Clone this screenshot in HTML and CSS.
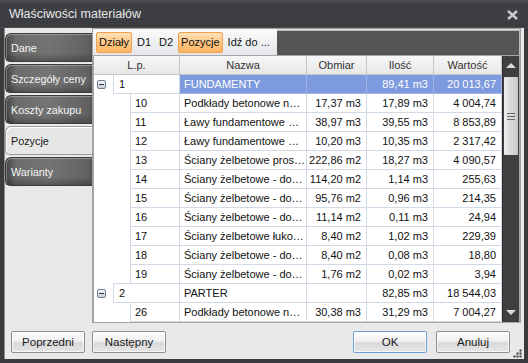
FILE: index.html
```html
<!DOCTYPE html>
<html lang="pl">
<head>
<meta charset="utf-8">
<title>Właściwości materiałów</title>
<link rel="stylesheet" href="styles.css">
</head>
<body>
<div class="window">
  <div class="titlebar">
    <span class="title">Właściwości materiałów</span>
    <span class="close">
      <svg width="11" height="10" viewBox="0 0 11 10"><path d="M1 1 L10 9 M10 1 L1 9" stroke="#c9cdd3" stroke-width="2.4" fill="none"/></svg>
    </span>
  </div>
  <div class="body">
    <div class="content">
      <div class="sidebar">
        <div class="tab">Dane</div>
        <div class="tab">Szczegóły ceny</div>
        <div class="tab">Koszty zakupu</div>
        <div class="tab active">Pozycje</div>
        <div class="tab">Warianty</div>
      </div>
      <div class="panel">
        <div class="toolbar">
          <div class="tb-items">
            <span class="tb-btn on">Działy</span>
            <span class="tb-btn">D1</span>
            <span class="tb-btn">D2</span>
            <span class="tb-btn on">Pozycje</span>
            <span class="tb-btn">Idź do ...</span>
          </div>
          <div class="tb-fill"></div>
        </div>
        <div class="grid">
          <div class="table">
            <div class="row head">
              <div class="c span3 hc">L.p.</div>
              <div class="c hc">Nazwa</div>
              <div class="c hc">Obmiar</div>
              <div class="c hc">Ilość</div>
              <div class="c hc">Wartość</div>
            </div>
            <div class="row group sel">
              <div class="c exp"><span class="minus"></span></div>
              <div class="c span2 gnum">1</div>
              <div class="c hl">FUNDAMENTY</div>
              <div class="c hl num"></div>
              <div class="c hl num">89,41 m3</div>
              <div class="c hl num">20 013,67</div>
            </div>
            <div class="row">
              <div class="c blank"></div><div class="c ind"></div>
              <div class="c">10</div><div class="c">Podkłady betonowe n…</div>
              <div class="c num">17,37 m3</div><div class="c num">17,89 m3</div><div class="c num">4 004,74</div>
            </div>
            <div class="row">
              <div class="c blank"></div><div class="c ind"></div>
              <div class="c">11</div><div class="c">Ławy fundamentowe …</div>
              <div class="c num">38,97 m3</div><div class="c num">39,55 m3</div><div class="c num">8 853,89</div>
            </div>
            <div class="row">
              <div class="c blank"></div><div class="c ind"></div>
              <div class="c">12</div><div class="c">Ławy fundamentowe …</div>
              <div class="c num">10,20 m3</div><div class="c num">10,35 m3</div><div class="c num">2 317,42</div>
            </div>
            <div class="row">
              <div class="c blank"></div><div class="c ind"></div>
              <div class="c">13</div><div class="c">Ściany żelbetowe pros…</div>
              <div class="c num">222,86 m2</div><div class="c num">18,27 m3</div><div class="c num">4 090,57</div>
            </div>
            <div class="row">
              <div class="c blank"></div><div class="c ind"></div>
              <div class="c">14</div><div class="c">Ściany żelbetowe - do…</div>
              <div class="c num">114,20 m2</div><div class="c num">1,14 m3</div><div class="c num">255,63</div>
            </div>
            <div class="row">
              <div class="c blank"></div><div class="c ind"></div>
              <div class="c">15</div><div class="c">Ściany żelbetowe - do…</div>
              <div class="c num">95,76 m2</div><div class="c num">0,96 m3</div><div class="c num">214,35</div>
            </div>
            <div class="row">
              <div class="c blank"></div><div class="c ind"></div>
              <div class="c">16</div><div class="c">Ściany żelbetowe - do…</div>
              <div class="c num">11,14 m2</div><div class="c num">0,11 m3</div><div class="c num">24,94</div>
            </div>
            <div class="row">
              <div class="c blank"></div><div class="c ind"></div>
              <div class="c">17</div><div class="c">Ściany żelbetowe łuko…</div>
              <div class="c num">8,40 m2</div><div class="c num">1,02 m3</div><div class="c num">229,39</div>
            </div>
            <div class="row">
              <div class="c blank"></div><div class="c ind"></div>
              <div class="c">18</div><div class="c">Ściany żelbetowe - do…</div>
              <div class="c num">8,40 m2</div><div class="c num">0,08 m3</div><div class="c num">18,80</div>
            </div>
            <div class="row">
              <div class="c blank"></div><div class="c ind last"></div>
              <div class="c">19</div><div class="c">Ściany żelbetowe - do…</div>
              <div class="c num">1,76 m2</div><div class="c num">0,02 m3</div><div class="c num">3,94</div>
            </div>
            <div class="row group">
              <div class="c exp"><span class="minus"></span></div>
              <div class="c span2 gnum">2</div>
              <div class="c">PARTER</div>
              <div class="c num"></div>
              <div class="c num">82,85 m3</div>
              <div class="c num">18 544,03</div>
            </div>
            <div class="row">
              <div class="c blank"></div><div class="c ind"></div>
              <div class="c">26</div><div class="c">Podkłady betonowe n…</div>
              <div class="c num">30,38 m3</div><div class="c num">31,29 m3</div><div class="c num">7 004,27</div>
            </div>
          </div>
          <div class="scrollbar">
            <div class="sb-btn"><span class="tri-up"></span></div>
            <div class="sb-track">
              <div class="thumb"><span class="grip"></span><span class="grip"></span><span class="grip"></span></div>
            </div>
            <div class="sb-btn"><span class="tri-down"></span></div>
          </div>
        </div>
      </div>
    </div>
    <div class="footer">
      <div class="btn-group">
        <button class="btn">Poprzedni</button>
        <button class="btn">Następny</button>
      </div>
      <div class="btn-group">
        <button class="btn default">OK</button>
        <button class="btn">Anuluj</button>
      </div>
      <div class="resize-grip">
        <svg width="9" height="9" viewBox="0 0 9 9" fill="#3a3a3a">
          <rect x="6.5" y="0.5" width="2" height="2"/>
          <rect x="3.5" y="3.5" width="2" height="2"/><rect x="6.5" y="3.5" width="2" height="2"/>
          <rect x="0.5" y="6.5" width="2" height="2"/><rect x="3.5" y="6.5" width="2" height="2"/><rect x="6.5" y="6.5" width="2" height="2"/>
        </svg>
      </div>
    </div>
  </div>
</div>
</body>
</html>
```
FILE: styles.css
```css
* { box-sizing: border-box; }
html, body { margin: 0; padding: 0; }
body {
  width: 528px;
  height: 363px;
  overflow: hidden;
  background: #393939;
  font-family: "Liberation Sans", Arial, sans-serif;
  font-size: 11px;
  color: #111;
}
.window {
  width: 528px;
  height: 363px;
  display: flex;
  flex-direction: column;
  background: #3a3b3e;
}
.titlebar {
  height: 28px;
  flex: none;
  display: flex;
  align-items: center;
  justify-content: space-between;
  padding: 0 10px 0 9px;
  background: linear-gradient(#4c4d52 0, #4a4b50 2px, #3f4045 3px, #3b3c40 100%);
  border-bottom: 1px solid #4a4b4f;
}
.title {
  color: #e6e6e6;
  font-size: 12.5px;
  padding-top: 1px;
}
.close { display: flex; padding-top: 2px; }

.body {
  flex: 1;
  margin: 0 4px 4px;
  background: #e9e9e9;
  display: flex;
  flex-direction: column;
  position: relative;
  border-left: 1px solid #8c8c8c;
}
.content {
  display: flex;
  height: 295px;
}
.sidebar {
  width: 87px;
  padding-top: 5px;
  display: flex;
  flex-direction: column;
  gap: 2px;
}
.tab {
  height: 29px;
  display: flex;
  align-items: center;
  padding-left: 5px;
  font-size: 10.8px;
  white-space: nowrap;
  color: #f4f4f4;
  border: 1px solid #3a3a3a;
  border-right: none;
  border-radius: 6px 0 0 5px;
  background: linear-gradient(to right, #4a4a4a 0, #6c6c6c 12%, #747474 50%, #606060 100%);
  box-shadow: inset 1px 1px 0 rgba(255,255,255,0.3), inset 0 -4px 5px rgba(0,0,0,0.25);
}
.tab.active {
  background: #e6e6e6;
  color: #1a1a1a;
  border-color: #9a9a9a;
  box-shadow: inset 1px 1px 0 #fff;
}
.panel {
  width: 429px;
  border: 1px solid #9f9f9f;
  background: #d8d8d8;
  display: flex;
  flex-direction: column;
}
.toolbar {
  height: 26px;
  display: flex;
  flex: none;
}
.tb-items {
  display: flex;
  align-items: center;
  gap: 2px;
  padding: 0 4px 0 3px;
  background: linear-gradient(#fbfbfb, #e4e6ea);
}
.tb-btn {
  height: 21px;
  display: flex;
  align-items: center;
  padding: 0 2px;
  border: 1px solid transparent;
  border-radius: 2px;
  font-size: 11px;
  white-space: nowrap;
}
.tb-btn.on {
  background: linear-gradient(#ffe2b8, #ffc47e 55%, #ffb565);
  border-color: #f0a04c;
}
.tb-fill {
  flex: 1;
  background: #555555;
  border-top: 1px solid #bdbdbd;
  border-right: 1px solid #bdbdbd;
  margin-top: 1px;
}
.grid {
  flex: 1;
  display: flex;
  border: 1px solid #a6a6a6;
  background: #fff;
}
.table {
  width: 408px;
  display: flex;
  flex-direction: column;
}
.row {
  display: grid;
  grid-template-columns: 19px 18px 49px 127px 60px 67px 68px;
  height: 19px;
}
.c {
  border-right: 1px solid #d3dae7;
  border-bottom: 1px solid #d3dae7;
  display: flex;
  align-items: center;
  padding: 0 4px;
  white-space: nowrap;
  overflow: hidden;
  color: #111;
}
.num { justify-content: flex-end; padding-right: 5px; }
.span3 { grid-column: span 3; }
.span2 { grid-column: span 2; }
.head .c {
  background: linear-gradient(#f7f7f7, #e7e7e7);
  border-right-color: #c6c6c6;
  border-bottom-color: #c6c6c6;
  justify-content: center;
  color: #333;
}
.blank { border: none; }
.ind { border-bottom: none; }
.ind.last { border-bottom: 1px solid #d3dae7; }
.exp {
  border: none;
  padding: 0 0 0 3px;
}
.minus {
  width: 9px;
  height: 9px;
  border: 1px solid #6f7c8c;
  border-radius: 2px;
  background: linear-gradient(#f4f6f9, #c9d0da);
  position: relative;
}
.minus::after {
  content: "";
  position: absolute;
  left: 1px;
  right: 1px;
  top: 3px;
  height: 1px;
  background: #2d3540;
}
.gnum {
  border-left: 1px solid #d3dae7;
  padding-left: 5px;
}
.hl {
  background: #7d9ade;
  color: #fff;
  border-right-color: #9fb3e6;
  border-bottom-color: #9fb3e6;
}
.scrollbar {
  width: 17px;
  background: #3f3f3f;
  display: flex;
  flex-direction: column;
  border-left: 1px solid #2e2e2e;
}
.sb-btn {
  height: 19px;
  display: flex;
  align-items: center;
  justify-content: center;
}
.tri-up, .tri-down {
  width: 0;
  height: 0;
  border-left: 5px solid transparent;
  border-right: 5px solid transparent;
}
.tri-up { border-bottom: 5px solid #dcdcdc; }
.tri-down { border-top: 5px solid #dcdcdc; }
.sb-track { flex: 1; padding: 2px 1px 0 1px; }
.thumb {
  height: 78px;
  border-radius: 1px;
  background: linear-gradient(to right, #f0f0f0, #dcdcdc 40%, #c8c8c8);
  display: flex;
  flex-direction: column;
  justify-content: center;
  align-items: center;
  gap: 2px;
}
.grip {
  width: 8px;
  height: 1px;
  background: #6a6a6a;
}
.footer {
  flex: 1;
  display: flex;
  justify-content: space-between;
  align-items: flex-start;
  padding: 8px 14px 0 6px;
}
.btn-group { display: flex; gap: 7px; }
.btn-group + .btn-group { gap: 9px; }
.btn {
  width: 74px;
  height: 22px;
  font-family: "Liberation Sans", Arial, sans-serif;
  font-size: 11.5px;
  color: #1a1a1a;
  border: 1px solid #8e8e8e;
  border-radius: 2px;
  background: linear-gradient(#fdfdfd, #f0f0f0 45%, #d9d9d9 55%, #e6e6e6);
  box-shadow: inset 0 0 0 1px rgba(255,255,255,0.7);
  padding: 0;
}
.btn.default { border-color: #6aa0d6; }
.resize-grip {
  position: absolute;
  right: 2px;
  bottom: 1px;
  display: flex;
}
```
